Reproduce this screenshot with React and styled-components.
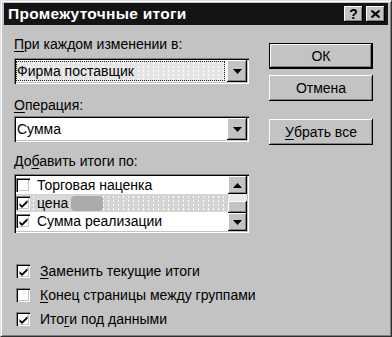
import React from 'react';
import styled, { createGlobalStyle } from 'styled-components';

const GlobalStyle = createGlobalStyle`
  html, body {
    margin: 0;
    padding: 0;
    background: #c3c3c3;
  }
  body {
    font-family: "Liberation Sans", Arial, sans-serif;
  }
`;

const Window = styled.div`
  width: 392px;
  height: 337px;
  box-sizing: border-box;
  background: #c3c3c3;
  border-top: 1px solid #e0e0e0;
  border-left: 1px solid #e0e0e0;
  border-right: 1px solid #303030;
  border-bottom: 1px solid #303030;
  box-shadow: inset 1px 1px 0 #ffffff, inset -1px -1px 0 #808080;
  padding: 2px 3px 0 3px;
  display: flex;
  flex-direction: column;
  overflow: hidden;
`;

const TitleBar = styled.div`
  height: 22px;
  background: #141414;
  display: flex;
  align-items: center;
  padding: 0 3px 0 4px;
  flex-shrink: 0;
`;

const Title = styled.div`
  flex: 1;
  color: #ffffff;
  font-weight: 700;
  font-size: 15.5px;
  letter-spacing: 0.3px;
`;

const TitleButton = styled.div`
  width: 19px;
  height: 16px;
  margin-left: ${p => p.$gap || 0}px;
  background: #c3c3c3;
  box-shadow: inset -1px -1px 0 #000, inset 1px 1px 0 #fff, inset -2px -2px 0 #808080;
  display: flex;
  align-items: center;
  justify-content: center;
  font-weight: 700;
  font-size: 14px;
  color: #000;
  line-height: 1;
`;

const Body = styled.div`
  display: flex;
  padding: 0 0 0 10px;
`;

const LeftCol = styled.div`
  width: 235px;
  display: flex;
  flex-direction: column;
`;

const RightCol = styled.div`
  margin-left: 20px;
  width: 104px;
  display: flex;
  flex-direction: column;
  padding-top: 18px;
`;

const Label = styled.div`
  font-size: 14px;
  line-height: 17px;
  height: 17px;
  color: #000;
  margin-top: ${p => p.$top}px;
  margin-bottom: ${p => p.$bottom}px;
  white-space: nowrap;
`;

const Key = styled.span`
  text-decoration: underline;
  text-underline-offset: 2px;
`;

const Combo = styled.div`
  height: 26px;
  box-sizing: border-box;
  background: #ffffff;
  box-shadow: inset 1px 1px 0 #808080, inset 2px 2px 0 #000, inset -1px -1px 0 #fff, inset -2px -2px 0 #c3c3c3;
  display: flex;
  align-items: stretch;
  padding: 2px;
`;

const ComboField = styled.div`
  flex: 1;
  display: flex;
  align-items: center;
  font-size: 14px;
  padding-left: 1px;
  margin: 1px 2px 1px 0;
  ${p => p.$focused && `
    outline: 1px dotted #222;
    outline-offset: -1px;
    background-image: radial-gradient(#ffffff 0.8px, transparent 0.9px);
    background-size: 5px 4px;
    background-color: #e4e4e4;
  `}
`;

const ArrowButton = styled.div`
  width: ${p => p.$w || 20}px;
  height: ${p => p.$h ? `${p.$h}px` : 'auto'};
  background: #c3c3c3;
  box-shadow: inset -1px -1px 0 #000, inset 1px 1px 0 #fff, inset -2px -2px 0 #808080;
  display: flex;
  align-items: center;
  justify-content: center;
  flex-shrink: 0;
`;

const ListBox = styled.div`
  height: 59px;
  box-sizing: border-box;
  background: #ffffff;
  box-shadow: inset 1px 1px 0 #808080, inset 2px 2px 0 #000, inset -1px -1px 0 #fff, inset -2px -2px 0 #c3c3c3;
  padding: 2px;
  display: flex;
`;

const Rows = styled.div`
  flex: 1;
  display: flex;
  flex-direction: column;
`;

const Row = styled.div`
  height: 18px;
  display: flex;
  align-items: center;
  font-size: 14px;
  padding-left: 0;
  white-space: nowrap;
  ${p => p.$selected && `
    background-color: #d4d4d4;
    background-image: radial-gradient(#ffffff 0.8px, transparent 0.9px);
    background-size: 5px 4px;
    background-position: 0 1px;
  `}
`;

const Blob = styled.span`
  display: inline-block;
  width: 32px;
  height: 15px;
  background: #ababab;
  border-radius: 4px;
  margin-left: 2px;
`;

const SelText = styled.span`
  background: #d8d8d8;
  padding-right: 1px;
`;

const ScrollBar = styled.div`
  width: 19px;
  display: flex;
  flex-direction: column;
`;

const Track = styled.div`
  flex: 1;
  background-color: #e8e8e8;
  background-image: radial-gradient(#ffffff 0.8px, transparent 0.9px);
  background-size: 3px 3px;
  display: flex;
  flex-direction: column;
  justify-content: flex-end;
`;

const Box = styled.span`
  width: 14px;
  height: 14px;
  box-sizing: border-box;
  background: #fff;
  box-shadow: inset 1px 1px 0 #808080, inset 2px 2px 0 #000, inset -1px -1px 0 #fff, inset -2px -2px 0 #c3c3c3;
  display: inline-flex;
  align-items: center;
  justify-content: center;
  padding: 1px 0 0 1px;
  margin-right: ${p => p.$gap}px;
  flex-shrink: 0;
`;

const Button = styled.div`
  height: 26px;
  box-sizing: border-box;
  margin-bottom: ${p => p.$mb || 0}px;
  background: #c3c3c3;
  font-size: 14px;
  display: flex;
  align-items: center;
  justify-content: center;
  color: #000;
  ${p => p.$default
    ? `border: 1px solid #000; box-shadow: inset -1px -1px 0 #000, inset 1px 1px 0 #fff, inset -2px -2px 0 #808080;`
    : `box-shadow: inset -1px -1px 0 #000, inset 1px 1px 0 #fff, inset -2px -2px 0 #808080;`}
`;

const Options = styled.div`
  display: flex;
  flex-direction: column;
  padding: 26px 0 0 12px;
`;

const Option = styled.div`
  height: 24px;
  display: flex;
  align-items: center;
  font-size: 14px;
  color: #000;
  white-space: nowrap;
`;

const Check = () => (
  <svg width="9" height="8" viewBox="0 0 9 8">
    <path d="M0.5 3 L3 5.5 L8.5 0 L8.5 2.8 L3 8 L0.5 5.8 Z" fill="#000" />
  </svg>
);

const Down = () => (
  <svg width="9" height="5" viewBox="0 0 9 5">
    <path d="M0 0 H9 L4.5 5 Z" fill="#000" />
  </svg>
);

const Up = () => (
  <svg width="9" height="5" viewBox="0 0 9 5">
    <path d="M0 5 H9 L4.5 0 Z" fill="#000" />
  </svg>
);

const listItems = [
  { text: 'Торговая наценка', checked: false },
  { text: 'цена', checked: true, selected: true },
  { text: 'Сумма реализации', checked: true },
];

const options = [
  { pre: '', key: 'З', post: 'аменить текущие итоги', checked: true },
  { pre: '', key: 'К', post: 'онец страницы между группами', checked: false },
  { pre: 'Ито', key: 'г', post: 'и под данными', checked: true },
];

export default function App() {
  return (
    <>
      <GlobalStyle />
      <Window>
        <TitleBar>
          <Title>Промежуточные итоги</Title>
          <TitleButton>?</TitleButton>
          <TitleButton $gap={3}>
            <svg width="9" height="8" viewBox="0 0 9 8">
              <path d="M0.5 0.5 L8.5 7.5 M8.5 0.5 L0.5 7.5" stroke="#000" strokeWidth="2" />
            </svg>
          </TitleButton>
        </TitleBar>
        <Body>
          <LeftCol>
            <Label $top={11} $bottom={5}><Key>П</Key>ри каждом изменении в:</Label>
            <Combo>
              <ComboField $focused>Фирма поставщик</ComboField>
              <ArrowButton><Down /></ArrowButton>
            </Combo>
            <Label $top={13} $bottom={2}><Key>О</Key>перация:</Label>
            <Combo>
              <ComboField>Сумма</ComboField>
              <ArrowButton><Down /></ArrowButton>
            </Combo>
            <Label $top={11} $bottom={4}>До<Key>б</Key>авить итоги по:</Label>
            <ListBox>
              <Rows>
                {listItems.map(item => (
                  <Row key={item.text} $selected={item.selected}>
                    <Box $gap={7}>{item.checked && <Check />}</Box>
                    {item.selected ? (
                      <>
                        <SelText>{item.text}</SelText>
                        <Blob />
                      </>
                    ) : item.text}
                  </Row>
                ))}
              </Rows>
              <ScrollBar>
                <ArrowButton $w={19} $h={18}><Up /></ArrowButton>
                <Track>
                  <ArrowButton $w={19} $h={12} />
                </Track>
                <ArrowButton $w={19} $h={18}><Down /></ArrowButton>
              </ScrollBar>
            </ListBox>
          </LeftCol>
          <RightCol>
            <Button $default $mb={6}>ОК</Button>
            <Button $mb={18}>Отмена</Button>
            <Button><Key>У</Key>брать все</Button>
          </RightCol>
        </Body>
        <Options>
          {options.map(o => (
            <Option key={o.post}>
              <Box $gap={10}>{o.checked && <Check />}</Box>
              {o.pre}<Key>{o.key}</Key>{o.post}
            </Option>
          ))}
        </Options>
      </Window>
    </>
  );
}
